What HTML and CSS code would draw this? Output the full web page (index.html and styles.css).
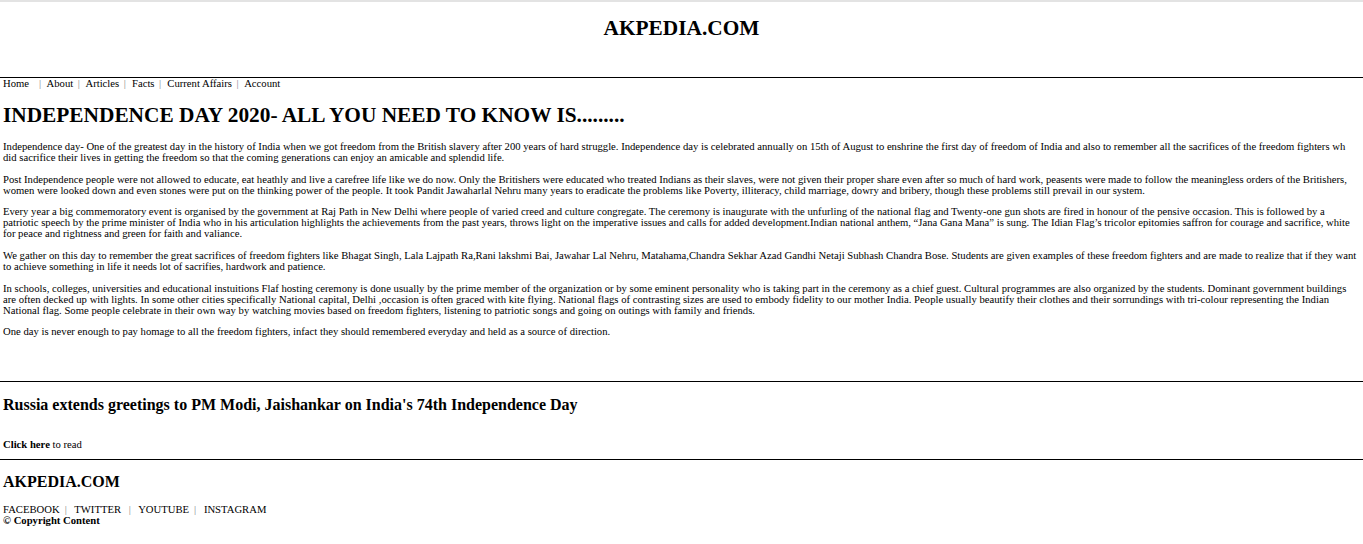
FILE: index.html
```html
<!DOCTYPE html>
<html lang="en">
<head>
<meta charset="utf-8">
<title>AKPEDIA.COM</title>
<link rel="stylesheet" href="styles.css">
</head>
<body>
<header class="site-header">
  <div class="brand">AKPEDIA.COM</div>
</header>
<hr class="rule">
<nav class="nav">
  <a href="#">Home</a>&nbsp; <span class="sep">|</span>
  <a href="#">About</a><span class="sep">|</span>
  <a href="#">Articles</a><span class="sep">|</span>
  <a href="#">Facts</a><span class="sep">|</span>
  <a href="#">Current Affairs</a><span class="sep">|</span>
  <a href="#">Account</a>
</nav>
<main class="article">
  <h1 class="title">INDEPENDENCE DAY 2020- ALL YOU NEED TO KNOW IS.........</h1>
  <p>Independence day- One of the greatest day in the history of India when we got freedom from the British slavery after 200 years of hard struggle. Independence day is celebrated annually on 15th of August to enshrine the first day of freedom of India and also to remember all the sacrifices of the freedom fighters wh did sacrifice their lives in getting the freedom so that the coming generations can enjoy an amicable and splendid life.</p>
  <p>Post Independence people were not allowed to educate, eat heathly and live a carefree life like we do now. Only the Britishers were educated who treated Indians as their slaves, were not given their proper share even after so much of hard work, peasents were made to follow the meaningless orders of the Britishers, women were looked down and even stones were put on the thinking power of the people. It took Pandit Jawaharlal Nehru many years to eradicate the problems like Poverty, illiteracy, child marriage, dowry and bribery, though these problems still prevail in our system.</p>
  <p>Every year a big commemoratory event is organised by the government at Raj Path in New Delhi where people of varied creed and culture congregate. The ceremony is inaugurate with the unfurling of the national flag and Twenty-one gun shots are fired in honour of the pensive occasion. This is followed by a patriotic speech by the prime minister of India who in his articulation highlights the achievements from the past years, throws light on the imperative issues and calls for added development.Indian national anthem, “Jana Gana Mana” is sung. The Idian Flag’s tricolor epitomies saffron for courage and sacrifice, white for peace and rightness and green for faith and valiance.</p>
  <p>We gather on this day to remember the great sacrifices of freedom fighters like Bhagat Singh, Lala Lajpath Ra,Rani lakshmi Bai, Jawahar Lal Nehru, Matahama,Chandra Sekhar Azad Gandhi Netaji Subhash Chandra Bose. Students are given examples of these freedom fighters and are made to realize that if they want to achieve something in life it needs lot of sacrifies, hardwork and patience.</p>
  <p class="tight-wrap">In schools, colleges, universities and educational instuitions Flaf hosting ceremony is done usually by the prime member of the organization or by some eminent personality who is taking part in the ceremony as a chief guest. Cultural programmes are also organized by the students. Dominant government buildings are often decked up with lights. In some other cities specifically National capital, Delhi ,occasion is often graced with kite flying. National flags of contrasting sizes are used to embody fidelity to our mother India. People usually beautify their clothes and their sorrundings with tri-colour representing the Indian National flag. Some people celebrate in their own way by watching movies based on freedom fighters, listening to patriotic songs and going on outings with family and friends.</p>
  <p>One day is never enough to pay homage to all the freedom fighters, infact they should remembered everyday and held as a source of direction.</p>
</main>
<hr class="rule rule-news">
<section class="news">
  <h2 class="news-title">Russia extends greetings to PM Modi, Jaishankar on India's 74th Independence Day</h2>
  <p class="news-link"><b>Click here</b> to read</p>
</section>
<hr class="rule">
<footer class="footer">
  <div class="footer-brand">AKPEDIA.COM</div>
  <div class="social">
    <a href="#">FACEBOOK</a><span class="sep">|</span>
    <a href="#">TWITTER</a>&nbsp;<span class="sep">|</span>
    <a href="#">YOUTUBE</a><span class="sep">|</span>
    <a href="#">INSTAGRAM</a>
  </div>
  <div class="copy">© Copyright Content</div>
</footer>
</body>
</html>
```

FILE: styles.css
```css
html, body {
  margin: 0;
  padding: 0;
}
body {
  font-family: "Liberation Serif", "Times New Roman", serif;
  font-size: 10.67px;
  color: #000;
  background: #fff;
  border-top: 2px solid #e3e3e3;
}
a {
  color: #000;
  text-decoration: none;
}
.site-header {
  padding: 14px 0 0;
  height: 75px;
  box-sizing: border-box;
}
.brand {
  text-align: center;
  font-weight: bold;
  font-size: 21.33px;
  line-height: 24px;
}
.rule {
  margin: 0;
  border: 0;
  border-top: 1px solid #000;
}
.nav {
  padding: 0 3px;
  line-height: 11px;
}
.nav .sep {
  color: #888;
  padding: 0 3.5px 0 4.5px;
}
.article {
  padding: 0 3px;
}
.title {
  font-size: 21.33px;
  line-height: 24px;
  margin: 14px 0 14px;
}
.article p {
  margin: 0 0 10.67px;
  line-height: 11px;
}
.article .tight-wrap {
  letter-spacing: 0.012px;
}
.rule-news {
  margin-top: 44px;
}
.news {
  padding: 0 3px;
}
.news-title {
  font-size: 16px;
  line-height: 20px;
  margin: 13px 0 23px;
}
.news-link {
  margin: 0 0 9px;
  line-height: 12px;
}
.footer {
  padding: 0 3px;
}
.footer-brand {
  font-weight: bold;
  font-size: 16px;
  line-height: 20px;
  margin: 12px 0 12px;
}
.social {
  line-height: 11px;
}
.social .sep {
  color: #888;
  padding: 0 5px 0 5px;
}
.copy {
  font-weight: bold;
  line-height: 11px;
}
```
